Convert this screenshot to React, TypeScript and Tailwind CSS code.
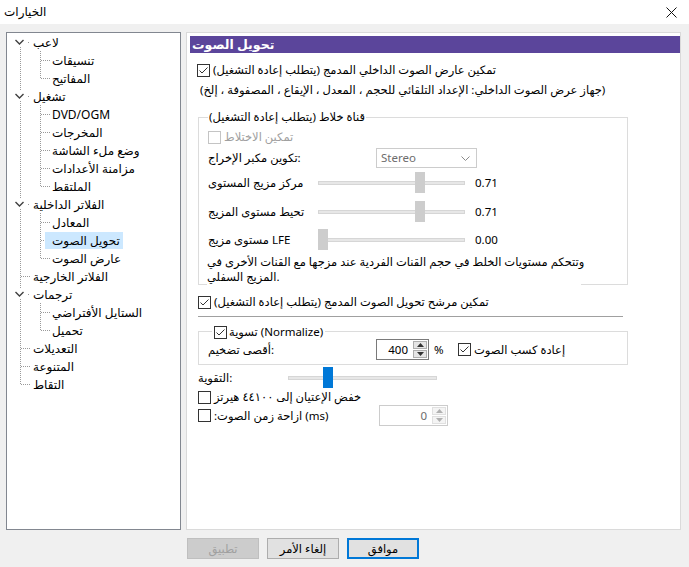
import React from 'react';

type Row = {
  t: string;
  kind: 'exp' | 'leaf' | 'child';
  first?: boolean;
  last?: boolean;
  sel?: boolean;
};

const rows: Row[] = [
  { t: 'لاعب', kind: 'exp', first: true },
  { t: 'تنسيقات', kind: 'child' },
  { t: 'المفاتيح', kind: 'child', last: true },
  { t: 'تشغيل', kind: 'exp' },
  { t: 'DVD/OGM', kind: 'child' },
  { t: 'المخرجات', kind: 'child' },
  { t: 'وضع ملء الشاشة', kind: 'child' },
  { t: 'مزامنة الأعدادات', kind: 'child' },
  { t: 'الملتقط', kind: 'child', last: true },
  { t: 'الفلاتر الداخلية', kind: 'exp' },
  { t: 'المعادل', kind: 'child' },
  { t: 'تحويل الصوت', kind: 'child', sel: true },
  { t: 'عارض الصوت', kind: 'child', last: true },
  { t: 'الفلاتر الخارجية', kind: 'leaf' },
  { t: 'ترجمات', kind: 'exp' },
  { t: 'الستايل الأفتراضي', kind: 'child' },
  { t: 'تحميل', kind: 'child', last: true },
  { t: 'التعديلات', kind: 'leaf' },
  { t: 'المتنوعة', kind: 'leaf' },
  { t: 'التقاط', kind: 'leaf', last: true },
];

const dot = { stroke: '#9a9a9a', strokeDasharray: '1 1', strokeWidth: 1 };

function TreeLines({ r }: { r: Row }) {
  const w = r.kind === 'child' ? 43 : 24;
  return (
    <svg width={w} height="18" className="shrink-0">
      {r.kind === 'exp' && (
        <>
          {!r.first && <line x1="13.5" y1="0" x2="13.5" y2="4" {...dot} />}
          <line x1="13.5" y1="14" x2="13.5" y2="18" {...dot} />
          <polyline points="8.5,7 12.5,11 16.5,7" fill="none" stroke="#404040" strokeWidth="1.4" />
          <rect x="21" y="9" width="1" height="1" fill="#9a9a9a" />
        </>
      )}
      {r.kind === 'leaf' && (
        <>
          <line x1="13.5" y1="0" x2="13.5" y2={r.last ? 10 : 18} {...dot} />
          <line x1="14" y1="9.5" x2="24" y2="9.5" {...dot} />
        </>
      )}
      {r.kind === 'child' && (
        <>
          <line x1="13.5" y1="0" x2="13.5" y2="18" {...dot} />
          <line x1="33.5" y1="0" x2="33.5" y2={r.last ? 10 : 18} {...dot} />
          <line x1="34" y1="9.5" x2="43" y2="9.5" {...dot} />
        </>
      )}
    </svg>
  );
}

function Check({ on, off }: { on?: boolean; off?: boolean }) {
  return (
    <span
      className={`w-[13px] h-[13px] border bg-white flex items-center justify-center shrink-0 ${
        off ? 'border-[#c4c4c4]' : 'border-[#333333]'
      }`}
    >
      {on && (
        <svg width="11" height="11" viewBox="0 0 11 11">
          <path d="M1.5 5.5 L4 8 L9.5 2.5" stroke="#333" fill="none" strokeWidth="1" />
        </svg>
      )}
    </span>
  );
}

function Spin({ value, off }: { value: string; off?: boolean }) {
  return (
    <div
      className={`h-[21px] border bg-white flex ${
        off ? 'w-[69px] border-[#cccccc] text-[#6d6d6d]' : 'w-[53px] border-[#7a7a7a]'
      }`}
    >
      <span className="flex-1 text-right pr-[4px] leading-[19px]">{value}</span>
      <div className="w-[16px] flex flex-col p-[1px] gap-[1px]">
        <div
          className={`flex-1 border flex items-center justify-center ${
            off ? 'border-[#e0e0e0] bg-[#f4f4f4]' : 'border-[#adadad] bg-[#e5e5e5]'
          }`}
        >
          <svg width="7" height="4">
            <path d="M0 4 L3.5 0 L7 4 Z" fill={off ? '#b0b0b0' : '#333'} />
          </svg>
        </div>
        <div
          className={`flex-1 border flex items-center justify-center ${
            off ? 'border-[#e0e0e0] bg-[#f4f4f4]' : 'border-[#adadad] bg-[#e5e5e5]'
          }`}
        >
          <svg width="7" height="4">
            <path d="M0 0 L3.5 4 L7 0 Z" fill={off ? '#b0b0b0' : '#333'} />
          </svg>
        </div>
      </div>
    </div>
  );
}

function Slider({ thumb, blue, wide }: { thumb: string; blue?: boolean; wide?: boolean }) {
  return (
    <div className={`relative h-[21px] flex items-center shrink-0 ${wide ? 'w-[149px]' : 'w-[147px]'}`}>
      <div className="w-full h-[4px] bg-[#e7e7e7] border border-[#d6d6d6]" />
      <div className={`absolute top-0 w-[10px] h-[21px] ${thumb} ${blue ? 'bg-[#0078d7]' : 'bg-[#cdcdcd]'}`} />
    </div>
  );
}

function MixRow({ label, value, thumb, cls }: { label: React.ReactNode; value: string; thumb: string; cls: string }) {
  return (
    <div className={`flex items-center h-[21px] ${cls}`}>
      <span className="w-[110px]">{label}</span>
      <Slider thumb={thumb} />
      <span className="ml-[10px]">{value}</span>
    </div>
  );
}

export default function App() {
  return (
    <div className="w-[689px] h-[567px] bg-[#f0f0f0] flex flex-col text-[11.5px] text-black font-['Segoe_UI','Noto_Sans','DejaVu_Sans',sans-serif] leading-[16px] overflow-hidden">
      <div className="h-[24px] bg-white flex items-center justify-between pl-[4px] pr-[12px]">
        <span dir="rtl" className="text-[12px]">الخيارات</span>
        <svg width="11" height="11" viewBox="0 0 11 11">
          <path d="M0.5 0.5 L10.5 10.5 M10.5 0.5 L0.5 10.5" stroke="#111" strokeWidth="1" />
        </svg>
      </div>

      <div className="flex pt-[8px] pl-[6px] gap-[5px]">
        {/* tree */}
        <div className="w-[175px] h-[498px] border border-[#828790] bg-white flex flex-col">
          {rows.map((r, i) => (
            <div key={i} className="flex items-center h-[18px] shrink-0">
              <TreeLines r={r} />
              <span
                dir="rtl"
                className={`whitespace-nowrap leading-[17px] text-[12px] ${
                  r.sel ? 'bg-[#cce8ff] -ml-[5px] pl-[7px] pr-[3px]' : 'pl-[2px]'
                }`}
              >
                {r.t}
              </span>
            </div>
          ))}
        </div>

        {/* page */}
        <div className="w-[495px] h-[498px] border border-[#dadada] bg-white pl-[3px] pt-[3px]">
          <div className="h-[17px] bg-[#5b459b] text-white font-bold text-[12.5px] leading-[17px] pl-[2px]">
            <span dir="rtl">تحويل الصوت</span>
          </div>

          <div className="flex items-center gap-[3px] h-[16px] mt-[9px] ml-[7px]">
            <Check on />
            <span dir="rtl">تمكين عارض الصوت الداخلي المدمج (يتطلب إعادة التشغيل)</span>
          </div>

          <div className="h-[16px] mt-[4px] ml-[10px] whitespace-nowrap">
            <span dir="rtl">(جهاز عرض الصوت الداخلي: الإعداد التلقائي للحجم ، المعدل ، الإيقاع ، المصفوفة ، إلخ)</span>
          </div>

          {/* mixer group */}
          <div className="w-[430px] ml-[8px] mt-[19px] border border-[#dcdcdc] pl-[9px]">
            <div className="-mt-[9px] h-[16px] w-fit bg-white px-[1px]" dir="rtl">
              قناة خلاط (يتطلب إعادة التشغيل)
            </div>
            <div className="flex items-center gap-[3px] h-[16px] mt-[4px]">
              <Check off />
              <span dir="rtl" className="text-[#a0a0a0]">تمكين الاختلاط</span>
            </div>
            <div className="flex items-center h-[20px] mt-[3px]">
              <span className="w-[168px]">
                <span dir="rtl">تكوين مكبر الإخراج</span>:
              </span>
              <div className="w-[101px] h-[20px] border border-[#cccccc] bg-white flex items-center justify-between pl-[4px] pr-[6px] text-[#6d6d6d]">
                <span>Stereo</span>
                <svg width="9" height="5">
                  <path d="M0.5 0.5 L4.5 4.5 L8.5 0.5" stroke="#8a8a8a" fill="none" />
                </svg>
              </div>
            </div>
            <MixRow label={<span dir="rtl">مركز مزيج المستوى</span>} value="0.71" thumb="left-[97px]" cls="mt-[4px]" />
            <MixRow label={<span dir="rtl">تحيط مستوى المزيج</span>} value="0.71" thumb="left-[97px]" cls="mt-[8px]" />
            <MixRow label={<span dir="rtl">LFE مستوى مزيج</span>} value="0.00" thumb="left-[0px]" cls="mt-[7px]" />
            <div className="w-[374px] -ml-[1px] mt-[4px] -mb-[2px] h-[32px] bg-white relative">
              <div className="leading-[15px] whitespace-nowrap">
                <span dir="rtl">وتتحكم مستويات الخلط في حجم القنات الفردية عند مزجها مع القنات الأخرى في</span>
              </div>
              <div className="leading-[15px]">
                <span dir="rtl">المزيج السفلي</span>.
              </div>
            </div>
          </div>

          <div className="flex items-center gap-[3px] h-[16px] mt-[9px] ml-[8px]">
            <Check on />
            <span dir="rtl">تمكين مرشح تحويل الصوت المدمج (يتطلب إعادة التشغيل)</span>
          </div>
          <div className="w-[425px] ml-[8px] mt-[6px] border-t border-[#a0a0a0]" />

          {/* normalize group */}
          <div className="w-[430px] ml-[8px] mt-[14px] border border-[#dcdcdc] pl-[9px] pb-[4px]">
            <div className="-mt-[8px] ml-[4px] h-[16px] w-fit bg-white px-[2px] flex items-center gap-[2px]">
              <Check on />
              <span>
                <span dir="rtl">تسوية</span> (Normalize)
              </span>
            </div>
            <div className="flex items-center h-[21px] -mt-[1px]">
              <span className="w-[168px]">
                <span dir="rtl">أقصى تضخيم</span>:
              </span>
              <Spin value="400" />
              <span className="ml-[5px] w-[24px]">%</span>
              <Check on />
              <span dir="rtl" className="ml-[3px]">إعادة كسب الصوت</span>
            </div>
          </div>

          <div className="flex items-center h-[21px] mt-[2px] ml-[8px]">
            <span className="w-[90px]">
              <span dir="rtl">التقوية</span>:
            </span>
            <Slider thumb="left-[35px]" blue wide />
          </div>
          <div className="flex items-center gap-[3px] h-[16px] mt-[1px] ml-[8px]">
            <Check />
            <span dir="rtl">خفض الإعتيان إلى ٤٤١٠٠ هيرتز</span>
          </div>
          <div className="flex items-center h-[21px] ml-[8px]">
            <Check />
            <span className="ml-[3px] w-[165px]">
              :<span dir="rtl">ازاحة زمن الصوت</span> (ms)
            </span>
            <Spin value="0" off />
          </div>
        </div>
      </div>

      <div className="flex gap-[8px] pl-[187px] mt-[8px]">
        <button className="w-[72px] h-[21px] bg-[#cccccc] border border-[#bfbfbf] text-[#a0a0a0] leading-[19px]">
          <span dir="rtl">تطبيق</span>
        </button>
        <button className="w-[72px] h-[21px] bg-[#e1e1e1] border border-[#adadad] leading-[19px]">
          <span dir="rtl">إلغاء الأمر</span>
        </button>
        <button className="w-[72px] h-[21px] bg-[#e1e1e1] border-2 border-[#0078d7] leading-[17px]">
          <span dir="rtl">موافق</span>
        </button>
      </div>
    </div>
  );
}
